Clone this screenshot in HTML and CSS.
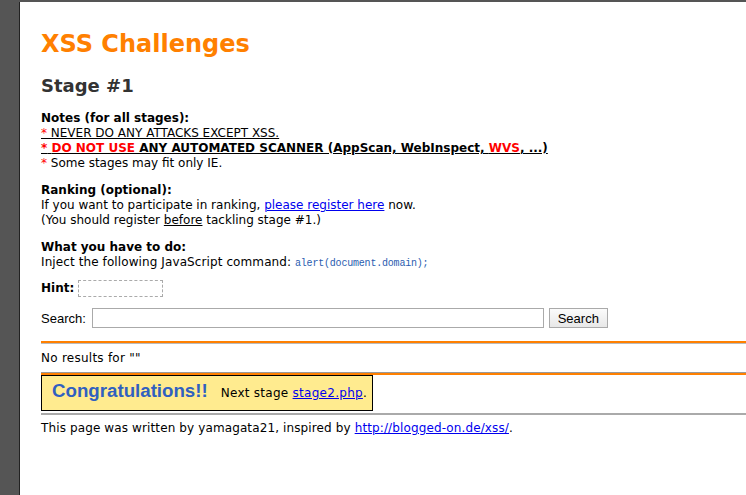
FILE: index.html
```html
<!DOCTYPE html>
<html>
<head>
<meta charset="utf-8">
<link rel="stylesheet" href="styles.css">
</head>
<body>
<div class="frame">
  <div class="page">
    <h1 class="title">XSS Challenges</h1>
    <h2 class="stage">Stage #1</h2>
    <div class="block notes">
      <b>Notes (for all stages):</b><br>
      <span class="u"><span class="red">*</span> NEVER DO ANY ATTACKS EXCEPT XSS.</span><br>
      <b class="u"><span class="red">*</span> <span class="red">DO NOT USE</span> ANY AUTOMATED SCANNER (AppScan, WebInspect, <span class="red">WVS</span>, ...)</b><br>
      <span class="red">*</span> Some stages may fit only IE.
    </div>
    <div class="block">
      <b>Ranking (optional):</b><br>
      If you want to participate in ranking, <a href="#">please register here</a> now.<br>
      (You should register <span class="u">before</span> tackling stage #1.)
    </div>
    <div class="block">
      <b>What you have to do:</b><br>
      <span class="inject">Inject the following JavaScript command:</span> <code class="code">alert(document.domain);</code>
    </div>
    <div class="hint"><b>Hint:</b> <span class="hintbox"></span></div>
    <form class="search">
      <label class="label">Search:</label>
      <input class="input" type="text">
      <button class="btn" type="button">Search</button>
    </form>
    <div class="sep1"></div>
    <div class="result">No results for ""</div>
    <div class="sep2"></div>
    <div class="congrats">
      <span class="cg">Congratulations!!</span>
      <span class="next">Next stage <a href="#">stage2.php</a>.</span>
    </div>
    <div class="sep3"></div>
    <div class="footer">This page was written by yamagata21, inspired by <a href="#">http://blogged-on.de/xss/</a>.</div>
  </div>
</div>
</body>
</html>
```
FILE: styles.css
```css
html, body {
  margin: 0;
  padding: 0;
  height: 100%;
}
body {
  background: #555555;
}
.frame {
  padding: 2px 0 0 19px;
  height: 100%;
  box-sizing: border-box;
}
.page {
  background: #ffffff;
  border-left: 1px solid #222;
  height: 100%;
  box-sizing: border-box;
  padding: 27px 0 0 21px;
  font-family: "DejaVu Sans", Verdana, sans-serif;
  font-size: 12px;
  line-height: 15px;
  color: #000;
}
.title {
  margin: 0;
  font-size: 24px;
  line-height: 30px;
  color: #ff8000;
  font-weight: bold;
}
.stage {
  margin: 15px 0 0 0;
  font-size: 18px;
  line-height: 24px;
  color: #333;
}
.block {
  margin-top: 12px;
}
.block.notes {
  margin-top: 13px;
}
.u {
  text-decoration: underline;
}
.red {
  color: #ff0000;
}
a {
  color: #0000ee;
}
.inject {
  letter-spacing: 0.1px;
}
.code {
  font-family: "Liberation Mono", monospace;
  font-size: 10px;
  line-height: 1;
  letter-spacing: -0.2px;
  color: #2a5db0;
}
.hint {
  margin-top: 10px;
  display: flex;
  align-items: center;
  gap: 4px;
}
.hintbox {
  display: inline-block;
  width: 83px;
  height: 15px;
  border: 1px dashed #aaa;
}
.search {
  margin: 11px 0 0 0;
  display: flex;
  align-items: center;
}
.label {
  font-family: "Liberation Sans", sans-serif;
  font-size: 13px;
  margin-right: 6px;
}
.input {
  width: 452px;
  height: 20px;
  box-sizing: border-box;
  border: 1px solid #aaa;
  padding: 0;
  margin: 0;
}
.btn {
  margin-left: 5px;
  width: 59px;
  height: 20px;
  box-sizing: border-box;
  border: 1px solid #aaa;
  background: linear-gradient(#fbfbfb, #e8e8e8);
  font-family: "Liberation Sans", sans-serif;
  font-size: 13px;
  padding: 0;
}
.sep1 {
  margin-top: 13px;
  height: 2px;
  background: #ff8000;
  border-bottom: 1px solid #bbb;
}
.result {
  line-height: 15px;
  padding: 7px 0 6px 0;
  letter-spacing: 0.25px;
}
.sep2 {
  border-top: 1px solid #999;
  height: 2px;
  background: #ff8000;
}
.congrats {
  display: flex;
  align-items: baseline;
  gap: 13px;
  background: #ffeb8f;
  border: 1px solid #000;
  padding: 7px 5px 9px 10px;
  width: 332px;
  box-sizing: border-box;
  white-space: nowrap;
}
.cg {
  font-family: "Liberation Sans", sans-serif;
  font-weight: bold;
  font-size: 18.7px;
  color: #3060c0;
  flex-shrink: 0;
}
.next {
  font-size: 12px;
  letter-spacing: 0.27px;
  flex-shrink: 0;
}
.sep3 {
  margin-top: 2px;
  height: 2px;
  background: #aaa;
}
.footer {
  margin-top: 6px;
  letter-spacing: 0.12px;
}
```
